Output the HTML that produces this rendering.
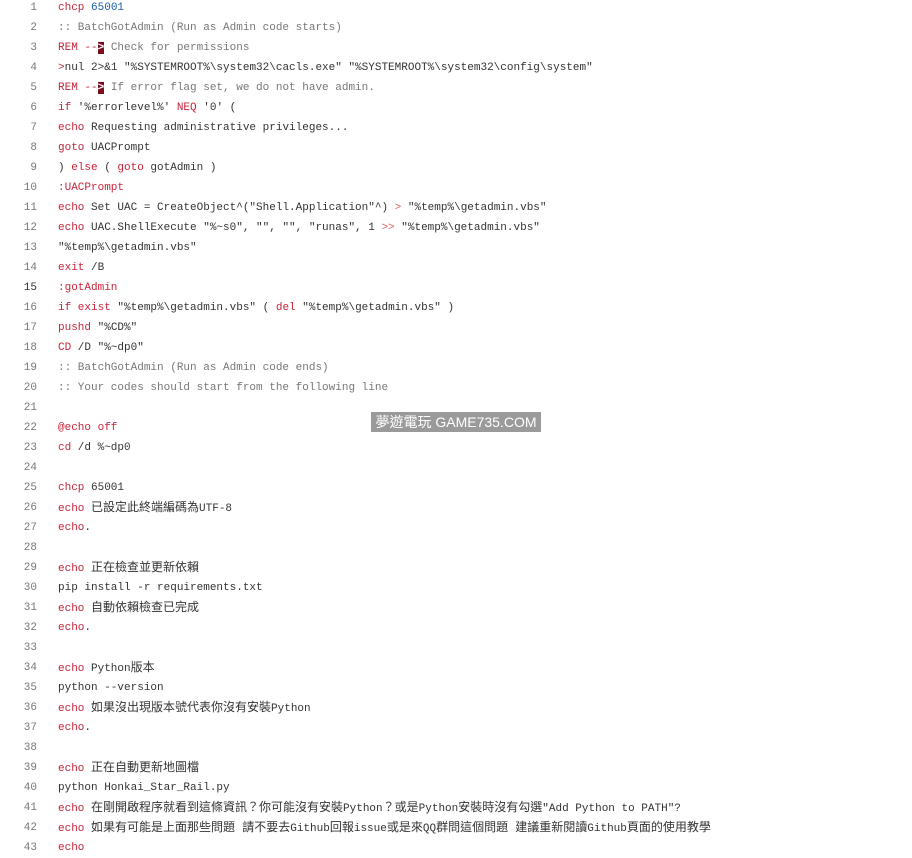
<!DOCTYPE html>
<html><head><meta charset="utf-8"><style>
body{margin:0;background:#fff;width:912px;height:845px;overflow:hidden;position:relative}
.c{position:absolute;top:-2px;left:0;font-family:"Liberation Mono","Noto Sans CJK TC",monospace;font-size:11px;color:#333}
.l{height:20px;line-height:20px;white-space:pre;position:relative}
.n{position:absolute;left:0;width:37px;text-align:right;color:#777}
.t{position:absolute;left:58px}
.k{color:#c8243a}.m{color:#1a5ca8}.g{color:#777}.r{color:#e06060}
.h{background:#7a0d1f;color:#fff;font-weight:bold}
.z{font-size:12px}
.w{position:absolute;left:371px;top:412px;width:170px;height:20px;background:#9a9a9a;color:#fff;font-family:"Liberation Sans","Noto Sans CJK TC",sans-serif;font-size:14px;line-height:20px;text-align:center}
</style></head><body>
<div class="c">
<div class="l"><span class="n">1</span><span class="t"><span class="k">chcp</span> <span class="m">65001</span></span></div>
<div class="l"><span class="n">2</span><span class="t g">:: BatchGotAdmin (Run as Admin code starts)</span></div>
<div class="l"><span class="n">3</span><span class="t"><span class="k">REM --</span><span class="h">&gt;</span><span class="g"> Check for permissions</span></span></div>
<div class="l"><span class="n">4</span><span class="t"><span class="k">&gt;</span>nul 2&gt;&amp;1 "%SYSTEMROOT%\system32\cacls.exe" "%SYSTEMROOT%\system32\config\system"</span></div>
<div class="l"><span class="n">5</span><span class="t"><span class="k">REM --</span><span class="h">&gt;</span><span class="g"> If error flag set, we do not have admin.</span></span></div>
<div class="l"><span class="n">6</span><span class="t"><span class="k">if</span> '%errorlevel%' <span class="k">NEQ</span> '0' (</span></div>
<div class="l"><span class="n">7</span><span class="t"><span class="k">echo</span> Requesting administrative privileges...</span></div>
<div class="l"><span class="n">8</span><span class="t"><span class="k">goto</span> UACPrompt</span></div>
<div class="l"><span class="n">9</span><span class="t">) <span class="k">else</span> ( <span class="k">goto</span> gotAdmin )</span></div>
<div class="l"><span class="n">10</span><span class="t k">:UACPrompt</span></div>
<div class="l"><span class="n">11</span><span class="t"><span class="k">echo</span> Set UAC = CreateObject^("Shell.Application"^) <span class="r">&gt;</span> "%temp%\getadmin.vbs"</span></div>
<div class="l"><span class="n">12</span><span class="t"><span class="k">echo</span> UAC.ShellExecute "%~s0", "", "", "runas", 1 <span class="r">&gt;&gt;</span> "%temp%\getadmin.vbs"</span></div>
<div class="l"><span class="n">13</span><span class="t">"%temp%\getadmin.vbs"</span></div>
<div class="l"><span class="n">14</span><span class="t"><span class="k">exit</span> /B</span></div>
<div class="l"><span class="n" style="color:#333">15</span><span class="t k">:gotAdmin</span></div>
<div class="l"><span class="n">16</span><span class="t"><span class="k">if exist</span> "%temp%\getadmin.vbs" ( <span class="k">del</span> "%temp%\getadmin.vbs" )</span></div>
<div class="l"><span class="n">17</span><span class="t"><span class="k">pushd</span> "%CD%"</span></div>
<div class="l"><span class="n">18</span><span class="t"><span class="k">CD</span> /D "%~dp0"</span></div>
<div class="l"><span class="n">19</span><span class="t g">:: BatchGotAdmin (Run as Admin code ends)</span></div>
<div class="l"><span class="n">20</span><span class="t g">:: Your codes should start from the following line</span></div>
<div class="l"><span class="n">21</span></div>
<div class="l"><span class="n">22</span><span class="t k">@echo off</span></div>
<div class="l"><span class="n">23</span><span class="t"><span class="k">cd</span> /d %~dp0</span></div>
<div class="l"><span class="n">24</span></div>
<div class="l"><span class="n">25</span><span class="t"><span class="k">chcp</span> 65001</span></div>
<div class="l"><span class="n">26</span><span class="t"><span class="k">echo</span> <span class="z">已設定此終端編碼為</span>UTF-8</span></div>
<div class="l"><span class="n">27</span><span class="t"><span class="k">echo</span>.</span></div>
<div class="l"><span class="n">28</span></div>
<div class="l"><span class="n">29</span><span class="t"><span class="k">echo</span> <span class="z">正在檢查並更新依賴</span></span></div>
<div class="l"><span class="n">30</span><span class="t">pip install -r requirements.txt</span></div>
<div class="l"><span class="n">31</span><span class="t"><span class="k">echo</span> <span class="z">自動依賴檢查已完成</span></span></div>
<div class="l"><span class="n">32</span><span class="t"><span class="k">echo</span>.</span></div>
<div class="l"><span class="n">33</span></div>
<div class="l"><span class="n">34</span><span class="t"><span class="k">echo</span> Python<span class="z">版本</span></span></div>
<div class="l"><span class="n">35</span><span class="t">python --version</span></div>
<div class="l"><span class="n">36</span><span class="t"><span class="k">echo</span> <span class="z">如果沒出現版本號代表你沒有安裝</span>Python</span></div>
<div class="l"><span class="n">37</span><span class="t"><span class="k">echo</span>.</span></div>
<div class="l"><span class="n">38</span></div>
<div class="l"><span class="n">39</span><span class="t"><span class="k">echo</span> <span class="z">正在自動更新地圖檔</span></span></div>
<div class="l"><span class="n">40</span><span class="t">python Honkai_Star_Rail.py</span></div>
<div class="l"><span class="n">41</span><span class="t"><span class="k">echo</span> <span class="z">在剛開啟程序就看到這條資訊？你可能沒有安裝</span>Python<span class="z">？或是</span>Python<span class="z">安裝時沒有勾選</span>"Add Python to PATH"?</span></div>
<div class="l"><span class="n">42</span><span class="t"><span class="k">echo</span> <span class="z">如果有可能是上面那些問題 請不要去</span>Github<span class="z">回報</span>issue<span class="z">或是來</span>QQ<span class="z">群問這個問題 建議重新閱讀</span>Github<span class="z">頁面的使用教學</span></span></div>
<div class="l"><span class="n">43</span><span class="t k">echo</span></div>
</div>
<div class="w">夢遊電玩 GAME735.COM</div>
</body></html>
